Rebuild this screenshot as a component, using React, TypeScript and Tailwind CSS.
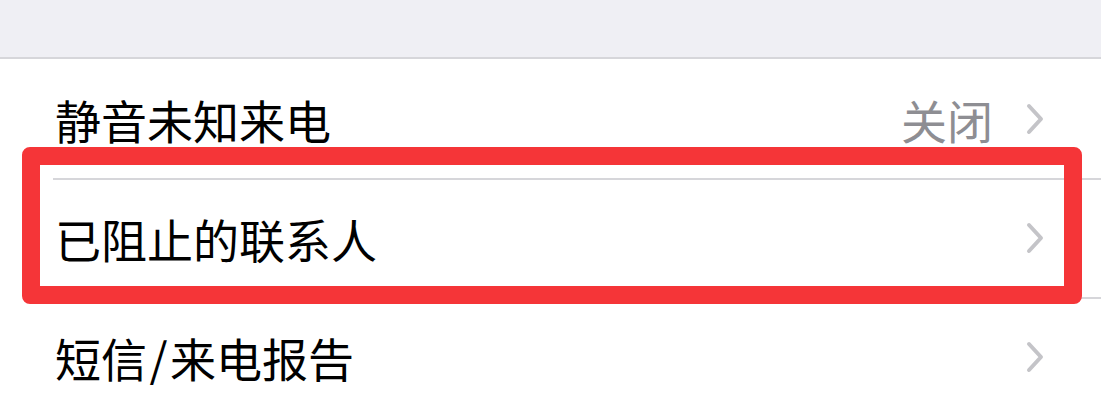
import React from "react";

const Chevron = () => (
  <svg width="20" height="32" viewBox="0 0 20 32" fill="none" className="shrink-0">
    <path d="M4 3 L16 16 L4 29" stroke="#c4c4c8" strokeWidth="4" strokeLinecap="round" strokeLinejoin="round" />
  </svg>
);

const Row = ({ label, value, border }: { label: React.ReactNode; value?: string; border: boolean }) => (
  <div className="relative flex h-[119px] items-center pl-[55px] pr-[56px]">
    {border && <div className="absolute left-[53px] right-0 top-0 h-[2px] bg-[#d6d6da]" />}
    <span className="flex-1 text-[46px] leading-none text-black">{label}</span>
    {value && <span className="mr-[32px] text-[46px] leading-none text-[#8e8e93]">{value}</span>}
    <Chevron />
  </div>
);

export default function App() {
  return (
    <div
      className="relative h-[400px] w-[1101px] overflow-hidden bg-white"
      style={{ fontFamily: '"Noto Sans CJK SC", "Noto Sans", sans-serif' }}
    >
      <div className="h-[57px] bg-[#efeff4]" />
      <div className="h-[2px] bg-[#d6d6da]" />
      <Row label="静音未知来电" value="关闭" border={false} />
      <Row label="已阻止的联系人" border={true} />
      <Row
        label={
          <>
            短信<span className="inline-block w-[23px] text-center">/</span>来电报告
          </>
        }
        border={true}
      />
      <div className="absolute left-[22px] top-[147px] h-[157px] w-[1060px] rounded-[8px] border-[18px] border-[#f53538]" />
    </div>
  );
}
